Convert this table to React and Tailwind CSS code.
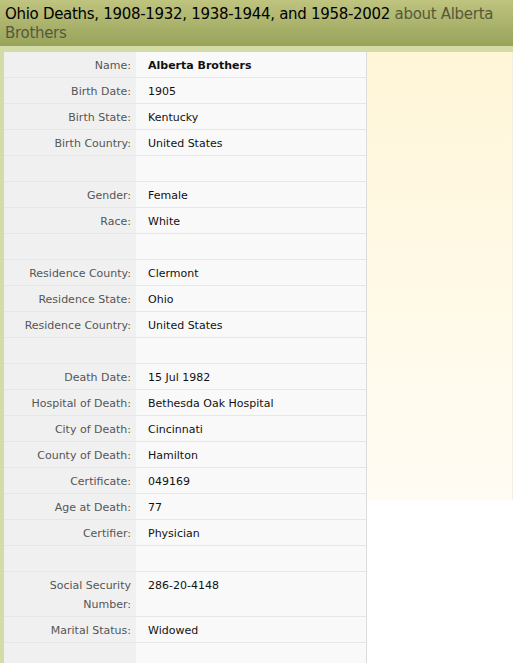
import React from "react";

const rows = [
  { label: "Name:", value: "Alberta Brothers", bold: true },
  { label: "Birth Date:", value: "1905" },
  { label: "Birth State:", value: "Kentucky" },
  { label: "Birth Country:", value: "United States" },
  {},
  { label: "Gender:", value: "Female" },
  { label: "Race:", value: "White" },
  {},
  { label: "Residence County:", value: "Clermont" },
  { label: "Residence State:", value: "Ohio" },
  { label: "Residence Country:", value: "United States" },
  {},
  { label: "Death Date:", value: "15 Jul 1982" },
  { label: "Hospital of Death:", value: "Bethesda Oak Hospital" },
  { label: "City of Death:", value: "Cincinnati" },
  { label: "County of Death:", value: "Hamilton" },
  { label: "Certificate:", value: "049169" },
  { label: "Age at Death:", value: "77" },
  { label: "Certifier:", value: "Physician" },
  {},
  { label: "Social Security Number:", value: "286-20-4148", tall: true },
  { label: "Marital Status:", value: "Widowed" },
  {},
];

export default function App() {
  return (
    <div
      className="w-[513px] h-[663px] overflow-hidden bg-white text-[11px]"
      style={{ fontFamily: "'DejaVu Sans', Verdana, sans-serif" }}
    >
      {/* Title bar */}
      <div className="bg-gradient-to-b from-[#bfc47f] to-[#98a35a] px-[5px] pt-[5px] h-[46px] text-[15px] leading-[19px] tracking-[-0.3px] text-black">
        Ohio Deaths, 1908-1932, 1938-1944, and 1958-2002{" "}
        <span className="text-[#55593a]">about Alberta Brothers</span>
      </div>
      <div className="h-[6px] bg-[#d5dba7]" />

      <div className="flex">
        <div className="w-[4px] shrink-0 bg-[#d5dba7]" />

        {/* Record table */}
        <div className="w-[363px] shrink-0 border-r border-[#dcdcdc]">
          {rows.map((r, i) => (
            <div key={i} className="flex border-b border-[#e6e6e6]">
              <div
                className={`w-[132px] shrink-0 bg-[#f0f0f0] text-right text-[#555] pr-[5px] ${
                  r.tall ? "pt-[4px] pb-[2px] leading-[19px] pl-[30px]" : "h-[25px] pt-[3px] leading-[22px]"
                }`}
              >
                {r.label || ""}
              </div>
              <div
                className={`flex-1 bg-[#f9f9f9] pl-[12px] text-[#111] ${
                  r.bold ? "font-bold" : ""
                } ${r.tall ? "pt-[4px] leading-[19px]" : "h-[25px] pt-[3px] leading-[22px]"}`}
              >
                {r.value || ""}
              </div>
            </div>
          ))}
        </div>

        {/* Side panel */}
        <div className="flex-1">
          <div className="h-[448px] bg-gradient-to-b from-[#fff6d8] to-[#fffcf4] border-r border-[#f3efe0]" />
        </div>
      </div>
    </div>
  );
}
